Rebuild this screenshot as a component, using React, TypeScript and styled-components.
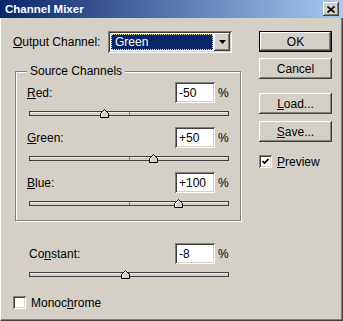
import React from "react";
import styled, { createGlobalStyle } from "styled-components";

const GlobalStyle = createGlobalStyle`
  html, body {
    margin: 0;
    padding: 0;
    background: #d4d0c8;
  }
  body {
    font-family: "Liberation Sans", Arial, sans-serif;
    font-size: 12px;
    color: #000;
  }
`;

const raised = `
  box-shadow: inset -1px -1px #404040, inset 1px 1px #fff,
    inset -2px -2px #808080, inset 2px 2px #d4d0c8;
`;

const sunken = `
  box-shadow: inset 1px 1px #808080, inset -1px -1px #fff,
    inset 2px 2px #404040, inset -2px -2px #d4d0c8;
`;

const Dialog = styled.div`
  width: 343px;
  height: 321px;
  display: flex;
  flex-direction: column;
  background: #d4d0c8;
  overflow: hidden;
`;

const TitleBar = styled.div`
  height: 18px;
  flex: none;
  display: flex;
  align-items: center;
  justify-content: space-between;
  padding: 0 4px 0 5px;
  background: linear-gradient(to right, #0a246a, #a6caf0);
  color: #fff;
  font-weight: bold;
  font-size: 11.5px;
`;

const CloseButton = styled.div`
  width: 16px;
  height: 14px;
  display: flex;
  align-items: center;
  justify-content: center;
  background: #d4d0c8;
  ${raised}
`;

const Body = styled.div`
  flex: 1;
  display: flex;
  border-left: 1px solid #fff;
  border-right: 1px solid #404040;
  border-bottom: 1px solid #404040;
  box-shadow: inset -1px -1px #808080;
`;

const LeftCol = styled.div`
  width: 258px;
  flex: none;
  display: flex;
  flex-direction: column;
  padding: 13px 0 0 12px;
  box-sizing: border-box;
`;

const RightCol = styled.div`
  width: 73px;
  display: flex;
  flex-direction: column;
  padding-top: 13px;
`;

const OutputRow = styled.div`
  display: flex;
  align-items: center;
  height: 22px;
`;

const OutputLabel = styled.span`
  width: 95px;
`;

const Select = styled.div`
  width: 124px;
  height: 22px;
  box-sizing: border-box;
  padding: 2px;
  display: flex;
  background: #fff;
  ${sunken}
`;

const Selected = styled.div`
  flex: 1;
  margin: 1px;
  border: 1px dotted #f0e8a8;
  background: #0a246a;
  color: #fff;
  display: flex;
  align-items: center;
  padding-left: 3px;
  font-size: 12px;
`;

const DropButton = styled.div`
  width: 16px;
  display: flex;
  align-items: center;
  justify-content: center;
  background: #d4d0c8;
  ${raised}
`;

const Group = styled.fieldset`
  margin: 11px 0 0 2px;
  padding: 0 0 12px 0;
  width: 226px;
  box-sizing: border-box;
  border: 1px solid #808080;
  box-shadow: inset 1px 1px #fff, 1px 1px #fff;
  min-inline-size: 0;
`;

const Legend = styled.legend`
  margin-left: 11px;
  padding: 0 3px;
  line-height: 14px;
  background: #d4d0c8;
`;

const ChannelBlock = styled.div<{ $offset: number; $top: number }>`
  width: 200px;
  margin-left: ${(p) => p.$offset}px;
  margin-top: ${(p) => p.$top}px;
`;

const ValueRow = styled.div`
  display: flex;
  align-items: center;
  height: 21px;
`;

const ValueLabel = styled.span<{ $shift: number }>`
  flex: 1;
  margin-left: ${(p) => p.$shift}px;
`;

const ValueInput = styled.div`
  width: 40px;
  height: 21px;
  box-sizing: border-box;
  padding: 0 0 0 4px;
  display: flex;
  align-items: center;
  background: #fff;
  ${sunken}
`;

const Percent = styled.span`
  width: 11px;
  margin-left: 3px;
`;

const SliderArea = styled.div`
  position: relative;
  height: 9px;
  margin-top: 6px;
  padding-top: 2px;
  box-sizing: border-box;
`;

const Track = styled.div`
  position: relative;
  height: 5px;
  box-sizing: border-box;
  border: 1px solid #404040;
  background: #d4d0c8;
  box-shadow: inset 0 1px #eeeae2;
`;

const CenterTick = styled.div`
  position: absolute;
  left: 50%;
  top: 0;
  bottom: 0;
  width: 1px;
  background: #808080;
`;

const Thumb = styled.svg`
  position: absolute;
  top: 0;
  display: block;
`;

const CheckRow = styled.div<{ $top: number }>`
  display: flex;
  align-items: center;
  height: 13px;
  margin-top: ${(p) => p.$top}px;
  gap: 5px;
`;

const CheckBox = styled.div`
  width: 13px;
  height: 13px;
  box-sizing: border-box;
  background: #fff;
  display: flex;
  align-items: center;
  justify-content: center;
  ${sunken}
`;

const Button = styled.div<{ $default?: boolean; $top: number }>`
  height: 21px;
  margin-top: ${(p) => p.$top}px;
  box-sizing: border-box;
  display: flex;
  align-items: center;
  justify-content: center;
  background: #d4d0c8;
  border: ${(p) => (p.$default ? "1px solid #000" : "none")};
  ${raised}
`;

type ChannelProps = {
  label: string;
  mnemonic: number;
  value: number;
  offset: number;
  top: number;
  shift: number;
};

const Mnemonic = ({ text, at }: { text: string; at: number }) => (
  <>
    {text.slice(0, at)}
    <u>{text[at]}</u>
    {text.slice(at + 1)}
  </>
);

const Channel = ({ label, mnemonic, value, offset, top, shift }: ChannelProps) => {
  const pos = ((value + 200) / 400) * 199;
  const shown = value > 0 ? `+${value}` : `${value}`;
  return (
    <ChannelBlock $offset={offset} $top={top}>
      <ValueRow>
        <ValueLabel $shift={shift}>
          <Mnemonic text={label} at={mnemonic} />
        </ValueLabel>
        <ValueInput>{shown}</ValueInput>
        <Percent>%</Percent>
      </ValueRow>
      <SliderArea>
        <Track>
          <CenterTick />
        </Track>
        <Thumb width="9" height="9" viewBox="0 0 9 9" style={{ left: Math.round(pos) - 4 }}>
          <path d="M0.5 8.5 V4.5 L4.5 0.5 L8.5 4.5 V8.5 Z" fill="#d4d0c8" stroke="#000" />
          <path d="M1.5 7.5 V4.9 L4.5 1.9" fill="none" stroke="#fff" />
        </Thumb>
      </SliderArea>
    </ChannelBlock>
  );
};

const Check = () => (
  <svg width="7" height="7" viewBox="0 0 7 7">
    <path d="M0.5 3 L2.5 5 L6.5 1" fill="none" stroke="#000" strokeWidth="1.7" />
  </svg>
);

export default function App() {
  return (
    <>
      <GlobalStyle />
      <Dialog>
        <TitleBar>
          <span>Channel Mixer</span>
          <CloseButton>
            <svg width="8" height="7" viewBox="0 0 8 7">
              <path d="M0.5 0.5 L7.5 6.5 M7.5 0.5 L0.5 6.5" stroke="#000" strokeWidth="1.6" />
            </svg>
          </CloseButton>
        </TitleBar>
        <Body>
          <LeftCol>
            <OutputRow>
              <OutputLabel>
                <Mnemonic text="Output Channel:" at={0} />
              </OutputLabel>
              <Select>
                <Selected>Green</Selected>
                <DropButton>
                  <svg width="7" height="4" viewBox="0 0 7 4">
                    <path d="M0 0 H7 L3.5 4 Z" fill="#000" />
                  </svg>
                </DropButton>
              </Select>
            </OutputRow>
            <Group>
              <Legend>Source Channels</Legend>
              <Channel label="Red:" mnemonic={0} value={-50} offset={13} top={4} shift={-2} />
              <Channel label="Green:" mnemonic={0} value={50} offset={13} top={9} shift={-2} />
              <Channel label="Blue:" mnemonic={0} value={100} offset={13} top={9} shift={-2} />
            </Group>
            <Channel label="Constant:" mnemonic={2} value={-8} offset={16} top={22} shift={0} />
            <CheckRow $top={17}>
              <CheckBox />
              <span>
                <Mnemonic text="Monochrome" at={5} />
              </span>
            </CheckRow>
          </LeftCol>
          <RightCol>
            <Button $default $top={0}>OK</Button>
            <Button $top={6}>Cancel</Button>
            <Button $top={14}>
              <Mnemonic text="Load..." at={0} />
            </Button>
            <Button $top={7}>
              <Mnemonic text="Save..." at={0} />
            </Button>
            <CheckRow $top={13}>
              <CheckBox>
                <Check />
              </CheckBox>
              <span>
                <Mnemonic text="Preview" at={0} />
              </span>
            </CheckRow>
          </RightCol>
        </Body>
      </Dialog>
    </>
  );
}
